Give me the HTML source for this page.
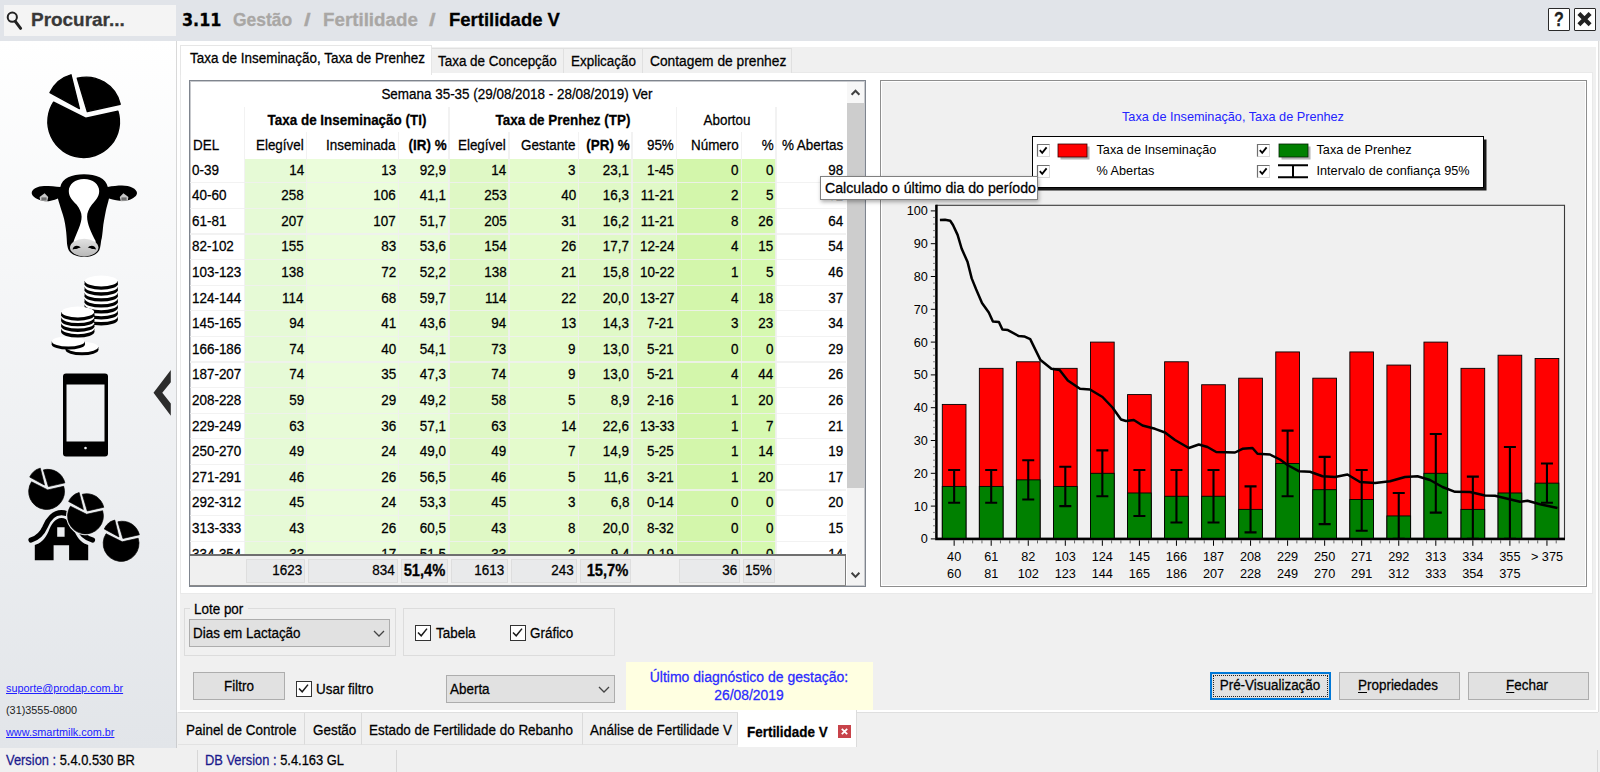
<!DOCTYPE html>
<html lang="pt-BR"><head><meta charset="utf-8"><title>Fertilidade V</title>
<style>
*{box-sizing:border-box}
html,body{margin:0;padding:0}
body{width:1600px;height:772px;overflow:hidden;background:#f0f0f0;position:relative;font-family:"Liberation Sans",Arial,sans-serif;font-size:15.4px;color:#000}
div{position:absolute;white-space:nowrap}
svg{position:absolute;overflow:visible}
.t{transform:scaleX(0.873);color:#000;-webkit-text-stroke:0.28px currentColor}
.b{font-weight:bold}
.dj{font-family:"DejaVu Sans","Liberation Sans",sans-serif}
.g{color:#a9a7a5}
.blue{color:#2a2aff}
.navy{color:#1a1a8c}
.lnk{color:#2020ff;text-decoration:underline;-webkit-text-stroke:0}
.ph{color:#222;-webkit-text-stroke:0}
#hdr{left:0;top:0;width:1600px;height:41px;background:#e1e4e9}
#srch{left:4px;top:5px;width:172px;height:31px;background:#f4f4f4}
.wbtn{top:8px;width:22px;height:22.5px;background:#fff;border:1.7px solid #2a2a2a;border-radius:1px}
#side{left:0;top:41px;width:177px;height:707px;background:linear-gradient(#ffffff,#e2e5e9);border-right:1px solid rgba(185,185,185,.55)}
#panel{left:177px;top:41px;width:1421px;height:671px;background:#f0f0f0;border:solid #fff;border-width:6.5px 2px 1px 3px;box-shadow:1px 0 0 #dcdcdc}
.itab{top:47.5px;height:25px;background:#f0f0f0;border:1px solid #e0e0e0;border-bottom:none}
.itab.act{top:45px;height:30px;background:#fff;border-color:#e6e6e6}
#pane{left:180px;top:72px;width:1413px;height:522px;background:#fff;border:1px solid #e9e9e9}
#tbl{left:189px;top:80px;width:677px;height:507px;border:1px solid #7f858e;background:#fff;box-shadow:inset 0 0 0 1px rgba(130,135,144,.45)}
.hl{left:190px;width:656px;height:1.2px;background:#f0f0f0;opacity:.85}
.vl{width:1.2px;background:#f0f0f0;opacity:.85}
.fc{top:558.5px;height:24px;background:#e9eaeb;border:1px solid #dedede}
#tfootbg{left:190px;top:555px;width:656px;height:30px;background:#f0f0f0}
#sb{left:847px;top:82px;width:17px;height:503px;background:#f3f3f3}
#sb .thumb{left:0;top:20px;width:17px;height:385.6px;background:#cdcdcd}
#cpanel{left:880px;top:80px;width:707px;height:507px;border:1px solid #8e8e8e;background:#f0f0f0}
#cpanel i{position:absolute;left:0;top:0;right:0;bottom:0;border:1px solid #fff}
.chart{left:880px;top:80px}
#tip{left:820px;top:175.6px;width:218px;height:24.6px;background:#fff;border:1px solid #808080;box-shadow:1px 2px 4px rgba(0,0,0,.32)}
.gb{border:1px solid #dcdcdc}
.combo{background:#e1e1e1;border:1px solid #adadad}
.combo svg{right:4.5px;top:9.5px}
.btn{background:#e1e1e1;border:1px solid #adadad;height:28px}
u{text-decoration-thickness:1px;text-underline-offset:2px}
.cb{width:15.5px;height:15.5px;border:1px solid #333;background:#fff}
.cb svg{left:0;top:0}
#ybox{left:626px;top:662px;width:247px;height:48px;background:#ffffe1}
#btabs{left:178px;top:710px;width:1420px;height:39px;background:#f0f0f0;border-top:2.5px solid #fff;border-bottom:1.2px solid #d8d8d8;box-shadow:inset 0 1px 0 #dfdfdf}
.btab{top:713px;height:32px;border-right:1px solid #dadada;border-bottom:1px solid #e2e2e2;background:#f0f0f0}
.btab.act{top:710px;height:37px;background:#fff;border:none;border-right:1px solid #dcdcdc}
#status{left:0;top:748px;width:1600px;height:24px;background:#f0f0f0}
#status .sep{top:2px;width:1px;height:22px;background:#d7d7d7}

</style></head>
<body>
<div id="hdr"></div>
<div id="srch"></div>
<svg width="20" height="24" viewBox="0 0 20 24" style="left:5px;top:8px"><circle cx="7.3" cy="9.2" r="4.6" fill="none" stroke="#222" stroke-width="2"/><path d="M10.3 13.4L15.6 20.3" stroke="#222" stroke-width="3" stroke-linecap="round"/></svg>
<div class="t b" style="top:8px;height:24px;line-height:24px;font-size:18.4px;left:30.5px;transform-origin:0 50%;transform:scaleX(1.03);color:#383838;">Procurar...</div>
<div class="t b dj" style="top:8px;height:24px;line-height:24px;font-size:17.2px;left:182px;transform-origin:0 50%;transform:scaleX(0.93);">3.11</div>
<div class="t b g" style="top:8px;height:24px;line-height:24px;font-size:18.4px;left:233px;transform-origin:0 50%;transform:scaleX(0.95);">Gestão</div>
<div class="t b g" style="top:8px;height:24px;line-height:24px;font-size:18.4px;left:303.5px;transform-origin:0 50%;transform:scaleX(1.3);">/</div>
<div class="t b g" style="top:8px;height:24px;line-height:24px;font-size:18.4px;left:323px;transform-origin:0 50%;transform:scaleX(1.02);">Fertilidade</div>
<div class="t b g" style="top:8px;height:24px;line-height:24px;font-size:18.4px;left:429px;transform-origin:0 50%;transform:scaleX(1.3);">/</div>
<div class="t b" style="top:8px;height:24px;line-height:24px;font-size:18.4px;left:448.5px;transform-origin:0 50%;transform:scaleX(1.005);">Fertilidade V</div>
<div class="wbtn" style="left:1548px"></div>
<div class="t b" style="left:1548px;width:22px;top:8px;height:22px;line-height:22.3px;text-align:center;font-size:20.5px;transform:scaleX(.78);transform-origin:50% 50%;color:#222">?</div>
<div class="wbtn" style="left:1574px"><svg width="18" height="18" viewBox="0 0 18 18" style="left:0;top:0"><path d="M3.9 4.5L15.1 15.7M15.1 4.5L3.9 15.7" stroke="#222" stroke-width="4.2"/></svg></div>
<div id="side"></div>
<svg width="177" height="772" viewBox="0 0 177 772" style="left:0;top:0">
<defs><linearGradient id="mz" x1="0" y1="0" x2="0" y2="1"><stop offset="0" stop-color="#e2e2e2"/><stop offset="1" stop-color="#b8b8b8"/></linearGradient>
</defs>
<g stroke-linejoin="round" fill="#000" stroke="#000" stroke-width="1.4"><path d="M86 118.3 L117.9 111.2 A35.8 35.8 0 1 1 53.6 102.2 Z"/><path d="M87.3 111.6 L120.2 104.2 A35 35 0 0 0 77.3 78.3 Z"/><path d="M79.4 108.6 L50 92.6 A33 33 0 0 1 71 74.8 Z"/></g>
<path fill="#000" d="M60.3 187C62 178 72 174.2 84 174.2C96 174.2 106 178 107.8 187C112 186 118 185.5 122 185.5C130 185.5 137 189 137 193C137 196 133 198.5 129 200C124 202 116 200.5 109 198.4C108 203 106.5 207 105.9 210.6C104.5 218 103.3 224 102.9 228.8C102.3 235 102 238 101.1 241C100.5 246 100 250 98 252C95 255.5 90 256.8 84.6 256.8C79 256.8 73 255.5 70 252C68 250 67.3 246 67 243.5C66.7 238 66.5 234 65.8 228.8C65 222 63.5 216 61.5 210.6C60.5 207 58.8 202 57.9 198.4C52 200.8 46 202.3 41 200.5C36 199 31.7 196 31.7 193C31.7 189 38 186 44 186C50 186 56 186.5 60.3 187Z"/>
<path fill="#fff" d="M84 179C93 179 99.2 184.5 99.2 191C99.2 197 95 201 92 204.5C88.5 209 87.1 213 87.1 216.7C87.1 224 91 232 95.6 241L95.6 247L73.7 247L73.7 241C77 232 81.6 224 81.6 216.7C81.6 213 80 209 76.5 204.5C73 201 68.8 197 68.8 191C68.8 184.5 75 179 84 179Z"/>
<ellipse cx="84.2" cy="247.6" rx="14.2" ry="8.8" fill="url(#mz)"/>
<path fill="#000" d="M72.6 249.6C72.8 245.2 78.8 244.2 80.8 248C78.6 247.2 77.8 249.4 75.6 249C74.4 248.8 73.4 249 72.6 249.6ZM96 249.6C95.8 245.2 89.8 244.2 87.8 248C90 247.2 90.8 249.4 93 249C94.2 248.8 95.2 249 96 249.6Z"/>
<path fill="#c9c9c9" d="M39.6 197L44.6 193.2L48.2 197L47.2 201.6L40.2 200.8Z"/><path fill="#6e6e6e" d="M41.4 197.4h5.2v3.2h-5.2z"/>
<path fill="#c9c9c9" d="M128.4 197L123.4 193.2L119.8 197L120.8 201.6L127.8 200.8Z"/><path fill="#6e6e6e" d="M121.4 197.4h5.2v3.2h-5.2z"/>
<ellipse cx="82" cy="350" rx="16.4" ry="5.2" fill="#000"/><rect x="65.6" y="347" width="32.8" height="3" fill="#000"/><ellipse cx="82" cy="347" rx="16.2" ry="5.2" fill="#fff"/>
<ellipse cx="68.3" cy="344.4" rx="16.6" ry="5.2" fill="#000"/><rect x="51.7" y="341.4" width="33.2" height="3" fill="#000"/><ellipse cx="68.3" cy="341.4" rx="16.4" ry="5.2" fill="#fff"/>
<ellipse cx="101.2" cy="320" rx="16.6" ry="5.4" fill="#000"/><rect x="84.6" y="316.7" width="33.2" height="3.3" fill="#000"/><ellipse cx="101.2" cy="316.7" rx="16.4" ry="5.4" fill="#fff"/>
<ellipse cx="101.2" cy="314.05" rx="16.6" ry="5.4" fill="#000"/><rect x="84.6" y="310.75" width="33.2" height="3.3" fill="#000"/><ellipse cx="101.2" cy="310.75" rx="16.4" ry="5.4" fill="#fff"/>
<ellipse cx="101.2" cy="308.1" rx="16.6" ry="5.4" fill="#000"/><rect x="84.6" y="304.8" width="33.2" height="3.3" fill="#000"/><ellipse cx="101.2" cy="304.8" rx="16.4" ry="5.4" fill="#fff"/>
<ellipse cx="101.2" cy="302.15" rx="16.6" ry="5.4" fill="#000"/><rect x="84.6" y="298.85" width="33.2" height="3.3" fill="#000"/><ellipse cx="101.2" cy="298.85" rx="16.4" ry="5.4" fill="#fff"/>
<ellipse cx="101.2" cy="296.2" rx="16.6" ry="5.4" fill="#000"/><rect x="84.6" y="292.9" width="33.2" height="3.3" fill="#000"/><ellipse cx="101.2" cy="292.9" rx="16.4" ry="5.4" fill="#fff"/>
<ellipse cx="101.2" cy="290.25" rx="16.6" ry="5.4" fill="#000"/><rect x="84.6" y="286.95" width="33.2" height="3.3" fill="#000"/><ellipse cx="101.2" cy="286.95" rx="16.4" ry="5.4" fill="#fff"/>
<ellipse cx="101.2" cy="284.3" rx="16.6" ry="5.4" fill="#000"/><rect x="84.6" y="281" width="33.2" height="3.3" fill="#000"/><ellipse cx="101.2" cy="281" rx="16.4" ry="5.4" fill="#fff"/>
<ellipse cx="77.8" cy="332.1" rx="16.6" ry="5.4" fill="#000"/><rect x="61.2" y="328.8" width="33.2" height="3.3" fill="#000"/><ellipse cx="77.8" cy="328.8" rx="16.4" ry="5.4" fill="#fff"/>
<ellipse cx="77.8" cy="326.5" rx="16.6" ry="5.4" fill="#000"/><rect x="61.2" y="323.2" width="33.2" height="3.3" fill="#000"/><ellipse cx="77.8" cy="323.2" rx="16.4" ry="5.4" fill="#fff"/>
<ellipse cx="77.8" cy="320.9" rx="16.6" ry="5.4" fill="#000"/><rect x="61.2" y="317.6" width="33.2" height="3.3" fill="#000"/><ellipse cx="77.8" cy="317.6" rx="16.4" ry="5.4" fill="#fff"/>
<ellipse cx="77.8" cy="315.3" rx="16.6" ry="5.4" fill="#000"/><rect x="61.2" y="312" width="33.2" height="3.3" fill="#000"/><ellipse cx="77.8" cy="312" rx="16.4" ry="5.4" fill="#fff"/>
<path fill="#000" fill-rule="evenodd" d="M66 373.5h39a3 3 0 0 1 3 3v77a3 3 0 0 1-3 3h-39a3 3 0 0 1-3-3v-77a3 3 0 0 1 3-3zM66.5 384.5v57h38v-57zM85.5 446.7a1.3 1.3 0 1 0 .01 0z"/>
<path d="M153.5 392.8L170.8 370L170.8 382.3L162.3 392.8L170.8 403.4L170.8 415.7Z" fill="#2c2c2c"/>
<path d="M31 540C38 538 42 534 45 527C48 519 54 512.6 61.5 512.6C69 512.6 75 519 78 527C81 534 85 538 92.5 540" stroke="#000" stroke-width="5.2" stroke-linecap="round" fill="none"/>
<path fill="#000" fill-rule="evenodd" d="M34.8 560.2V545C40 543.5 45 539.5 48.5 531.5C51 524.5 55 518 61.5 518C68 518 72 524.5 74.5 531.5C78 539.5 83 543.5 88.2 545V560.2H69.1V545.2H53.6V560.2ZM57.2 527.2h7.4v9.6h-7.4z"/>
<g transform="translate(4.75 430.75) scale(.5)"><g stroke-linejoin="round" fill="#eceef0" stroke="#eceef0" stroke-width="5.6"><path d="M86 118.3 L117.9 111.2 A35.8 35.8 0 1 1 53.6 102.2 Z"/><path d="M87.3 111.6 L120.2 104.2 A35 35 0 0 0 77.3 78.3 Z"/><path d="M79.4 108.6 L50 92.6 A33 33 0 0 1 71 74.8 Z"/></g><g stroke-linejoin="round" fill="#000" stroke="#000" stroke-width="1.4"><path d="M86 118.3 L117.9 111.2 A35.8 35.8 0 1 1 53.6 102.2 Z"/><path d="M87.3 111.6 L120.2 104.2 A35 35 0 0 0 77.3 78.3 Z"/><path d="M79.4 108.6 L50 92.6 A33 33 0 0 1 71 74.8 Z"/></g></g>
<g transform="translate(43.65 455.15) scale(.5)"><g stroke-linejoin="round" fill="#eceef0" stroke="#eceef0" stroke-width="5.6"><path d="M86 118.3 L117.9 111.2 A35.8 35.8 0 1 1 53.6 102.2 Z"/><path d="M87.3 111.6 L120.2 104.2 A35 35 0 0 0 77.3 78.3 Z"/><path d="M79.4 108.6 L50 92.6 A33 33 0 0 1 71 74.8 Z"/></g><g stroke-linejoin="round" fill="#000" stroke="#000" stroke-width="1.4"><path d="M86 118.3 L117.9 111.2 A35.8 35.8 0 1 1 53.6 102.2 Z"/><path d="M87.3 111.6 L120.2 104.2 A35 35 0 0 0 77.3 78.3 Z"/><path d="M79.4 108.6 L50 92.6 A33 33 0 0 1 71 74.8 Z"/></g></g>
<g transform="translate(79.25 482.65) scale(.5)"><g stroke-linejoin="round" fill="#eceef0" stroke="#eceef0" stroke-width="5.6"><path d="M86 118.3 L117.9 111.2 A35.8 35.8 0 1 1 53.6 102.2 Z"/><path d="M87.3 111.6 L120.2 104.2 A35 35 0 0 0 77.3 78.3 Z"/><path d="M79.4 108.6 L50 92.6 A33 33 0 0 1 71 74.8 Z"/></g><g stroke-linejoin="round" fill="#000" stroke="#000" stroke-width="1.4"><path d="M86 118.3 L117.9 111.2 A35.8 35.8 0 1 1 53.6 102.2 Z"/><path d="M87.3 111.6 L120.2 104.2 A35 35 0 0 0 77.3 78.3 Z"/><path d="M79.4 108.6 L50 92.6 A33 33 0 0 1 71 74.8 Z"/></g></g>
</svg>
<div class="t lnk" style="top:681.3px;height:14px;line-height:14px;font-size:10.85px;left:6px;transform-origin:0 50%;transform:scaleX(1);">suporte@prodap.com.br</div>
<div class="t ph" style="top:702.7px;height:14px;line-height:14px;font-size:10.85px;left:6px;transform-origin:0 50%;transform:scaleX(1);">(31)3555-0800</div>
<div class="t lnk" style="top:724.8px;height:14px;line-height:14px;font-size:10.85px;left:6px;transform-origin:0 50%;transform:scaleX(1);">www.smartmilk.com.br</div>
<div id="panel"></div>
<div id="pane"></div>
<div class="itab" style="left:431px;width:133px"></div>
<div class="itab" style="left:563px;width:80px"></div>
<div class="itab" style="left:642px;width:150px;border-right:1px solid #e0e0e0"></div>
<div class="itab act" style="left:180px;width:252px"></div>
<div class="t " style="top:47.6px;height:20px;line-height:20px;left:190px;transform-origin:0 50%;">Taxa de Inseminação, Taxa de Prenhez</div>
<div class="t " style="top:50.8px;height:20px;line-height:20px;left:437.5px;transform-origin:0 50%;">Taxa de Concepção</div>
<div class="t " style="top:50.8px;height:20px;line-height:20px;left:570.5px;transform-origin:0 50%;">Explicação</div>
<div class="t " style="top:50.8px;height:20px;line-height:20px;left:650.3px;transform-origin:0 50%;transform:scaleX(0.895);">Contagem de prenhez</div>
<div id="tbl"></div>
<div id="gclip" style="left:0;top:0;width:1600px;height:554.3px;overflow:hidden">
<div style="left:244.5px;width:62px;top:158.6px;height:395.7px;background:#e6fad6"></div>
<div style="left:306.5px;width:92.3px;top:158.6px;height:395.7px;background:#ebfddb"></div>
<div style="left:398.8px;width:50.2px;top:158.6px;height:395.7px;background:#e9fcd9"></div>
<div style="left:449px;width:60px;top:158.6px;height:395.7px;background:#dff8c5"></div>
<div style="left:509px;width:69.5px;top:158.6px;height:395.7px;background:#e4fbcc"></div>
<div style="left:578.5px;width:53.5px;top:158.6px;height:395.7px;background:#e0f9c7"></div>
<div style="left:632px;width:44.7px;top:158.6px;height:395.7px;background:#e0f9c7"></div>
<div style="left:676.7px;width:64.6px;top:158.6px;height:395.7px;background:#d3f6ab"></div>
<div style="left:741.3px;width:34.7px;top:158.6px;height:395.7px;background:#d6f9b0"></div>
<div class="hl" style="top:182.2px"></div>
<div class="hl" style="top:207.8px"></div>
<div class="hl" style="top:233.4px"></div>
<div class="hl" style="top:259px"></div>
<div class="hl" style="top:284.6px"></div>
<div class="hl" style="top:310.2px"></div>
<div class="hl" style="top:335.8px"></div>
<div class="hl" style="top:361.4px"></div>
<div class="hl" style="top:387px"></div>
<div class="hl" style="top:412.6px"></div>
<div class="hl" style="top:438.2px"></div>
<div class="hl" style="top:463.8px"></div>
<div class="hl" style="top:489.4px"></div>
<div class="hl" style="top:515px"></div>
<div class="hl" style="top:540.6px"></div>
<div class="vl" style="left:243.9px;top:107px;height:447.3px"></div>
<div class="vl" style="left:305.9px;top:132px;height:422.3px"></div>
<div class="vl" style="left:398.2px;top:132px;height:422.3px"></div>
<div class="vl" style="left:448.4px;top:107px;height:447.3px"></div>
<div class="vl" style="left:508.4px;top:132px;height:422.3px"></div>
<div class="vl" style="left:577.9px;top:132px;height:422.3px"></div>
<div class="vl" style="left:631.4px;top:132px;height:422.3px"></div>
<div class="vl" style="left:676.1px;top:107px;height:447.3px"></div>
<div class="vl" style="left:740.7px;top:132px;height:422.3px"></div>
<div class="vl" style="left:775.4px;top:107px;height:447.3px"></div>
<div class="t " style="top:159.6px;height:20px;line-height:20px;left:191.8px;transform-origin:0 50%;">0-39</div>
<div class="t " style="top:159.6px;height:20px;line-height:20px;right:1296.3px;transform-origin:100% 50%;">14</div>
<div class="t " style="top:159.6px;height:20px;line-height:20px;right:1204px;transform-origin:100% 50%;">13</div>
<div class="t " style="top:159.6px;height:20px;line-height:20px;right:1153.8px;transform-origin:100% 50%;">92,9</div>
<div class="t " style="top:159.6px;height:20px;line-height:20px;right:1093.8px;transform-origin:100% 50%;">14</div>
<div class="t " style="top:159.6px;height:20px;line-height:20px;right:1024.3px;transform-origin:100% 50%;">3</div>
<div class="t " style="top:159.6px;height:20px;line-height:20px;right:970.8px;transform-origin:100% 50%;">23,1</div>
<div class="t " style="top:159.6px;height:20px;line-height:20px;right:926.1px;transform-origin:100% 50%;">1-45</div>
<div class="t " style="top:159.6px;height:20px;line-height:20px;right:861.5px;transform-origin:100% 50%;">0</div>
<div class="t " style="top:159.6px;height:20px;line-height:20px;right:826.8px;transform-origin:100% 50%;">0</div>
<div class="t " style="top:159.6px;height:20px;line-height:20px;right:757.3px;transform-origin:100% 50%;">98</div>
<div class="t " style="top:185.2px;height:20px;line-height:20px;left:191.8px;transform-origin:0 50%;">40-60</div>
<div class="t " style="top:185.2px;height:20px;line-height:20px;right:1296.3px;transform-origin:100% 50%;">258</div>
<div class="t " style="top:185.2px;height:20px;line-height:20px;right:1204px;transform-origin:100% 50%;">106</div>
<div class="t " style="top:185.2px;height:20px;line-height:20px;right:1153.8px;transform-origin:100% 50%;">41,1</div>
<div class="t " style="top:185.2px;height:20px;line-height:20px;right:1093.8px;transform-origin:100% 50%;">253</div>
<div class="t " style="top:185.2px;height:20px;line-height:20px;right:1024.3px;transform-origin:100% 50%;">40</div>
<div class="t " style="top:185.2px;height:20px;line-height:20px;right:970.8px;transform-origin:100% 50%;">16,3</div>
<div class="t " style="top:185.2px;height:20px;line-height:20px;right:926.1px;transform-origin:100% 50%;">11-21</div>
<div class="t " style="top:185.2px;height:20px;line-height:20px;right:861.5px;transform-origin:100% 50%;">2</div>
<div class="t " style="top:185.2px;height:20px;line-height:20px;right:826.8px;transform-origin:100% 50%;">5</div>
<div class="t " style="top:185.2px;height:20px;line-height:20px;right:757.3px;transform-origin:100% 50%;">82</div>
<div class="t " style="top:210.8px;height:20px;line-height:20px;left:191.8px;transform-origin:0 50%;">61-81</div>
<div class="t " style="top:210.8px;height:20px;line-height:20px;right:1296.3px;transform-origin:100% 50%;">207</div>
<div class="t " style="top:210.8px;height:20px;line-height:20px;right:1204px;transform-origin:100% 50%;">107</div>
<div class="t " style="top:210.8px;height:20px;line-height:20px;right:1153.8px;transform-origin:100% 50%;">51,7</div>
<div class="t " style="top:210.8px;height:20px;line-height:20px;right:1093.8px;transform-origin:100% 50%;">205</div>
<div class="t " style="top:210.8px;height:20px;line-height:20px;right:1024.3px;transform-origin:100% 50%;">31</div>
<div class="t " style="top:210.8px;height:20px;line-height:20px;right:970.8px;transform-origin:100% 50%;">16,2</div>
<div class="t " style="top:210.8px;height:20px;line-height:20px;right:926.1px;transform-origin:100% 50%;">11-21</div>
<div class="t " style="top:210.8px;height:20px;line-height:20px;right:861.5px;transform-origin:100% 50%;">8</div>
<div class="t " style="top:210.8px;height:20px;line-height:20px;right:826.8px;transform-origin:100% 50%;">26</div>
<div class="t " style="top:210.8px;height:20px;line-height:20px;right:757.3px;transform-origin:100% 50%;">64</div>
<div class="t " style="top:236.4px;height:20px;line-height:20px;left:191.8px;transform-origin:0 50%;">82-102</div>
<div class="t " style="top:236.4px;height:20px;line-height:20px;right:1296.3px;transform-origin:100% 50%;">155</div>
<div class="t " style="top:236.4px;height:20px;line-height:20px;right:1204px;transform-origin:100% 50%;">83</div>
<div class="t " style="top:236.4px;height:20px;line-height:20px;right:1153.8px;transform-origin:100% 50%;">53,6</div>
<div class="t " style="top:236.4px;height:20px;line-height:20px;right:1093.8px;transform-origin:100% 50%;">154</div>
<div class="t " style="top:236.4px;height:20px;line-height:20px;right:1024.3px;transform-origin:100% 50%;">26</div>
<div class="t " style="top:236.4px;height:20px;line-height:20px;right:970.8px;transform-origin:100% 50%;">17,7</div>
<div class="t " style="top:236.4px;height:20px;line-height:20px;right:926.1px;transform-origin:100% 50%;">12-24</div>
<div class="t " style="top:236.4px;height:20px;line-height:20px;right:861.5px;transform-origin:100% 50%;">4</div>
<div class="t " style="top:236.4px;height:20px;line-height:20px;right:826.8px;transform-origin:100% 50%;">15</div>
<div class="t " style="top:236.4px;height:20px;line-height:20px;right:757.3px;transform-origin:100% 50%;">54</div>
<div class="t " style="top:262px;height:20px;line-height:20px;left:191.8px;transform-origin:0 50%;">103-123</div>
<div class="t " style="top:262px;height:20px;line-height:20px;right:1296.3px;transform-origin:100% 50%;">138</div>
<div class="t " style="top:262px;height:20px;line-height:20px;right:1204px;transform-origin:100% 50%;">72</div>
<div class="t " style="top:262px;height:20px;line-height:20px;right:1153.8px;transform-origin:100% 50%;">52,2</div>
<div class="t " style="top:262px;height:20px;line-height:20px;right:1093.8px;transform-origin:100% 50%;">138</div>
<div class="t " style="top:262px;height:20px;line-height:20px;right:1024.3px;transform-origin:100% 50%;">21</div>
<div class="t " style="top:262px;height:20px;line-height:20px;right:970.8px;transform-origin:100% 50%;">15,8</div>
<div class="t " style="top:262px;height:20px;line-height:20px;right:926.1px;transform-origin:100% 50%;">10-22</div>
<div class="t " style="top:262px;height:20px;line-height:20px;right:861.5px;transform-origin:100% 50%;">1</div>
<div class="t " style="top:262px;height:20px;line-height:20px;right:826.8px;transform-origin:100% 50%;">5</div>
<div class="t " style="top:262px;height:20px;line-height:20px;right:757.3px;transform-origin:100% 50%;">46</div>
<div class="t " style="top:287.6px;height:20px;line-height:20px;left:191.8px;transform-origin:0 50%;">124-144</div>
<div class="t " style="top:287.6px;height:20px;line-height:20px;right:1296.3px;transform-origin:100% 50%;">114</div>
<div class="t " style="top:287.6px;height:20px;line-height:20px;right:1204px;transform-origin:100% 50%;">68</div>
<div class="t " style="top:287.6px;height:20px;line-height:20px;right:1153.8px;transform-origin:100% 50%;">59,7</div>
<div class="t " style="top:287.6px;height:20px;line-height:20px;right:1093.8px;transform-origin:100% 50%;">114</div>
<div class="t " style="top:287.6px;height:20px;line-height:20px;right:1024.3px;transform-origin:100% 50%;">22</div>
<div class="t " style="top:287.6px;height:20px;line-height:20px;right:970.8px;transform-origin:100% 50%;">20,0</div>
<div class="t " style="top:287.6px;height:20px;line-height:20px;right:926.1px;transform-origin:100% 50%;">13-27</div>
<div class="t " style="top:287.6px;height:20px;line-height:20px;right:861.5px;transform-origin:100% 50%;">4</div>
<div class="t " style="top:287.6px;height:20px;line-height:20px;right:826.8px;transform-origin:100% 50%;">18</div>
<div class="t " style="top:287.6px;height:20px;line-height:20px;right:757.3px;transform-origin:100% 50%;">37</div>
<div class="t " style="top:313.2px;height:20px;line-height:20px;left:191.8px;transform-origin:0 50%;">145-165</div>
<div class="t " style="top:313.2px;height:20px;line-height:20px;right:1296.3px;transform-origin:100% 50%;">94</div>
<div class="t " style="top:313.2px;height:20px;line-height:20px;right:1204px;transform-origin:100% 50%;">41</div>
<div class="t " style="top:313.2px;height:20px;line-height:20px;right:1153.8px;transform-origin:100% 50%;">43,6</div>
<div class="t " style="top:313.2px;height:20px;line-height:20px;right:1093.8px;transform-origin:100% 50%;">94</div>
<div class="t " style="top:313.2px;height:20px;line-height:20px;right:1024.3px;transform-origin:100% 50%;">13</div>
<div class="t " style="top:313.2px;height:20px;line-height:20px;right:970.8px;transform-origin:100% 50%;">14,3</div>
<div class="t " style="top:313.2px;height:20px;line-height:20px;right:926.1px;transform-origin:100% 50%;">7-21</div>
<div class="t " style="top:313.2px;height:20px;line-height:20px;right:861.5px;transform-origin:100% 50%;">3</div>
<div class="t " style="top:313.2px;height:20px;line-height:20px;right:826.8px;transform-origin:100% 50%;">23</div>
<div class="t " style="top:313.2px;height:20px;line-height:20px;right:757.3px;transform-origin:100% 50%;">34</div>
<div class="t " style="top:338.8px;height:20px;line-height:20px;left:191.8px;transform-origin:0 50%;">166-186</div>
<div class="t " style="top:338.8px;height:20px;line-height:20px;right:1296.3px;transform-origin:100% 50%;">74</div>
<div class="t " style="top:338.8px;height:20px;line-height:20px;right:1204px;transform-origin:100% 50%;">40</div>
<div class="t " style="top:338.8px;height:20px;line-height:20px;right:1153.8px;transform-origin:100% 50%;">54,1</div>
<div class="t " style="top:338.8px;height:20px;line-height:20px;right:1093.8px;transform-origin:100% 50%;">73</div>
<div class="t " style="top:338.8px;height:20px;line-height:20px;right:1024.3px;transform-origin:100% 50%;">9</div>
<div class="t " style="top:338.8px;height:20px;line-height:20px;right:970.8px;transform-origin:100% 50%;">13,0</div>
<div class="t " style="top:338.8px;height:20px;line-height:20px;right:926.1px;transform-origin:100% 50%;">5-21</div>
<div class="t " style="top:338.8px;height:20px;line-height:20px;right:861.5px;transform-origin:100% 50%;">0</div>
<div class="t " style="top:338.8px;height:20px;line-height:20px;right:826.8px;transform-origin:100% 50%;">0</div>
<div class="t " style="top:338.8px;height:20px;line-height:20px;right:757.3px;transform-origin:100% 50%;">29</div>
<div class="t " style="top:364.4px;height:20px;line-height:20px;left:191.8px;transform-origin:0 50%;">187-207</div>
<div class="t " style="top:364.4px;height:20px;line-height:20px;right:1296.3px;transform-origin:100% 50%;">74</div>
<div class="t " style="top:364.4px;height:20px;line-height:20px;right:1204px;transform-origin:100% 50%;">35</div>
<div class="t " style="top:364.4px;height:20px;line-height:20px;right:1153.8px;transform-origin:100% 50%;">47,3</div>
<div class="t " style="top:364.4px;height:20px;line-height:20px;right:1093.8px;transform-origin:100% 50%;">74</div>
<div class="t " style="top:364.4px;height:20px;line-height:20px;right:1024.3px;transform-origin:100% 50%;">9</div>
<div class="t " style="top:364.4px;height:20px;line-height:20px;right:970.8px;transform-origin:100% 50%;">13,0</div>
<div class="t " style="top:364.4px;height:20px;line-height:20px;right:926.1px;transform-origin:100% 50%;">5-21</div>
<div class="t " style="top:364.4px;height:20px;line-height:20px;right:861.5px;transform-origin:100% 50%;">4</div>
<div class="t " style="top:364.4px;height:20px;line-height:20px;right:826.8px;transform-origin:100% 50%;">44</div>
<div class="t " style="top:364.4px;height:20px;line-height:20px;right:757.3px;transform-origin:100% 50%;">26</div>
<div class="t " style="top:390px;height:20px;line-height:20px;left:191.8px;transform-origin:0 50%;">208-228</div>
<div class="t " style="top:390px;height:20px;line-height:20px;right:1296.3px;transform-origin:100% 50%;">59</div>
<div class="t " style="top:390px;height:20px;line-height:20px;right:1204px;transform-origin:100% 50%;">29</div>
<div class="t " style="top:390px;height:20px;line-height:20px;right:1153.8px;transform-origin:100% 50%;">49,2</div>
<div class="t " style="top:390px;height:20px;line-height:20px;right:1093.8px;transform-origin:100% 50%;">58</div>
<div class="t " style="top:390px;height:20px;line-height:20px;right:1024.3px;transform-origin:100% 50%;">5</div>
<div class="t " style="top:390px;height:20px;line-height:20px;right:970.8px;transform-origin:100% 50%;">8,9</div>
<div class="t " style="top:390px;height:20px;line-height:20px;right:926.1px;transform-origin:100% 50%;">2-16</div>
<div class="t " style="top:390px;height:20px;line-height:20px;right:861.5px;transform-origin:100% 50%;">1</div>
<div class="t " style="top:390px;height:20px;line-height:20px;right:826.8px;transform-origin:100% 50%;">20</div>
<div class="t " style="top:390px;height:20px;line-height:20px;right:757.3px;transform-origin:100% 50%;">26</div>
<div class="t " style="top:415.6px;height:20px;line-height:20px;left:191.8px;transform-origin:0 50%;">229-249</div>
<div class="t " style="top:415.6px;height:20px;line-height:20px;right:1296.3px;transform-origin:100% 50%;">63</div>
<div class="t " style="top:415.6px;height:20px;line-height:20px;right:1204px;transform-origin:100% 50%;">36</div>
<div class="t " style="top:415.6px;height:20px;line-height:20px;right:1153.8px;transform-origin:100% 50%;">57,1</div>
<div class="t " style="top:415.6px;height:20px;line-height:20px;right:1093.8px;transform-origin:100% 50%;">63</div>
<div class="t " style="top:415.6px;height:20px;line-height:20px;right:1024.3px;transform-origin:100% 50%;">14</div>
<div class="t " style="top:415.6px;height:20px;line-height:20px;right:970.8px;transform-origin:100% 50%;">22,6</div>
<div class="t " style="top:415.6px;height:20px;line-height:20px;right:926.1px;transform-origin:100% 50%;">13-33</div>
<div class="t " style="top:415.6px;height:20px;line-height:20px;right:861.5px;transform-origin:100% 50%;">1</div>
<div class="t " style="top:415.6px;height:20px;line-height:20px;right:826.8px;transform-origin:100% 50%;">7</div>
<div class="t " style="top:415.6px;height:20px;line-height:20px;right:757.3px;transform-origin:100% 50%;">21</div>
<div class="t " style="top:441.2px;height:20px;line-height:20px;left:191.8px;transform-origin:0 50%;">250-270</div>
<div class="t " style="top:441.2px;height:20px;line-height:20px;right:1296.3px;transform-origin:100% 50%;">49</div>
<div class="t " style="top:441.2px;height:20px;line-height:20px;right:1204px;transform-origin:100% 50%;">24</div>
<div class="t " style="top:441.2px;height:20px;line-height:20px;right:1153.8px;transform-origin:100% 50%;">49,0</div>
<div class="t " style="top:441.2px;height:20px;line-height:20px;right:1093.8px;transform-origin:100% 50%;">49</div>
<div class="t " style="top:441.2px;height:20px;line-height:20px;right:1024.3px;transform-origin:100% 50%;">7</div>
<div class="t " style="top:441.2px;height:20px;line-height:20px;right:970.8px;transform-origin:100% 50%;">14,9</div>
<div class="t " style="top:441.2px;height:20px;line-height:20px;right:926.1px;transform-origin:100% 50%;">5-25</div>
<div class="t " style="top:441.2px;height:20px;line-height:20px;right:861.5px;transform-origin:100% 50%;">1</div>
<div class="t " style="top:441.2px;height:20px;line-height:20px;right:826.8px;transform-origin:100% 50%;">14</div>
<div class="t " style="top:441.2px;height:20px;line-height:20px;right:757.3px;transform-origin:100% 50%;">19</div>
<div class="t " style="top:466.8px;height:20px;line-height:20px;left:191.8px;transform-origin:0 50%;">271-291</div>
<div class="t " style="top:466.8px;height:20px;line-height:20px;right:1296.3px;transform-origin:100% 50%;">46</div>
<div class="t " style="top:466.8px;height:20px;line-height:20px;right:1204px;transform-origin:100% 50%;">26</div>
<div class="t " style="top:466.8px;height:20px;line-height:20px;right:1153.8px;transform-origin:100% 50%;">56,5</div>
<div class="t " style="top:466.8px;height:20px;line-height:20px;right:1093.8px;transform-origin:100% 50%;">46</div>
<div class="t " style="top:466.8px;height:20px;line-height:20px;right:1024.3px;transform-origin:100% 50%;">5</div>
<div class="t " style="top:466.8px;height:20px;line-height:20px;right:970.8px;transform-origin:100% 50%;">11,6</div>
<div class="t " style="top:466.8px;height:20px;line-height:20px;right:926.1px;transform-origin:100% 50%;">3-21</div>
<div class="t " style="top:466.8px;height:20px;line-height:20px;right:861.5px;transform-origin:100% 50%;">1</div>
<div class="t " style="top:466.8px;height:20px;line-height:20px;right:826.8px;transform-origin:100% 50%;">20</div>
<div class="t " style="top:466.8px;height:20px;line-height:20px;right:757.3px;transform-origin:100% 50%;">17</div>
<div class="t " style="top:492.4px;height:20px;line-height:20px;left:191.8px;transform-origin:0 50%;">292-312</div>
<div class="t " style="top:492.4px;height:20px;line-height:20px;right:1296.3px;transform-origin:100% 50%;">45</div>
<div class="t " style="top:492.4px;height:20px;line-height:20px;right:1204px;transform-origin:100% 50%;">24</div>
<div class="t " style="top:492.4px;height:20px;line-height:20px;right:1153.8px;transform-origin:100% 50%;">53,3</div>
<div class="t " style="top:492.4px;height:20px;line-height:20px;right:1093.8px;transform-origin:100% 50%;">45</div>
<div class="t " style="top:492.4px;height:20px;line-height:20px;right:1024.3px;transform-origin:100% 50%;">3</div>
<div class="t " style="top:492.4px;height:20px;line-height:20px;right:970.8px;transform-origin:100% 50%;">6,8</div>
<div class="t " style="top:492.4px;height:20px;line-height:20px;right:926.1px;transform-origin:100% 50%;">0-14</div>
<div class="t " style="top:492.4px;height:20px;line-height:20px;right:861.5px;transform-origin:100% 50%;">0</div>
<div class="t " style="top:492.4px;height:20px;line-height:20px;right:826.8px;transform-origin:100% 50%;">0</div>
<div class="t " style="top:492.4px;height:20px;line-height:20px;right:757.3px;transform-origin:100% 50%;">20</div>
<div class="t " style="top:518px;height:20px;line-height:20px;left:191.8px;transform-origin:0 50%;">313-333</div>
<div class="t " style="top:518px;height:20px;line-height:20px;right:1296.3px;transform-origin:100% 50%;">43</div>
<div class="t " style="top:518px;height:20px;line-height:20px;right:1204px;transform-origin:100% 50%;">26</div>
<div class="t " style="top:518px;height:20px;line-height:20px;right:1153.8px;transform-origin:100% 50%;">60,5</div>
<div class="t " style="top:518px;height:20px;line-height:20px;right:1093.8px;transform-origin:100% 50%;">43</div>
<div class="t " style="top:518px;height:20px;line-height:20px;right:1024.3px;transform-origin:100% 50%;">8</div>
<div class="t " style="top:518px;height:20px;line-height:20px;right:970.8px;transform-origin:100% 50%;">20,0</div>
<div class="t " style="top:518px;height:20px;line-height:20px;right:926.1px;transform-origin:100% 50%;">8-32</div>
<div class="t " style="top:518px;height:20px;line-height:20px;right:861.5px;transform-origin:100% 50%;">0</div>
<div class="t " style="top:518px;height:20px;line-height:20px;right:826.8px;transform-origin:100% 50%;">0</div>
<div class="t " style="top:518px;height:20px;line-height:20px;right:757.3px;transform-origin:100% 50%;">15</div>
<div class="t " style="top:543.6px;height:20px;line-height:20px;left:191.8px;transform-origin:0 50%;">334-354</div>
<div class="t " style="top:543.6px;height:20px;line-height:20px;right:1296.3px;transform-origin:100% 50%;">33</div>
<div class="t " style="top:543.6px;height:20px;line-height:20px;right:1204px;transform-origin:100% 50%;">17</div>
<div class="t " style="top:543.6px;height:20px;line-height:20px;right:1153.8px;transform-origin:100% 50%;">51,5</div>
<div class="t " style="top:543.6px;height:20px;line-height:20px;right:1093.8px;transform-origin:100% 50%;">33</div>
<div class="t " style="top:543.6px;height:20px;line-height:20px;right:1024.3px;transform-origin:100% 50%;">3</div>
<div class="t " style="top:543.6px;height:20px;line-height:20px;right:970.8px;transform-origin:100% 50%;">9,4</div>
<div class="t " style="top:543.6px;height:20px;line-height:20px;right:926.1px;transform-origin:100% 50%;">0-19</div>
<div class="t " style="top:543.6px;height:20px;line-height:20px;right:861.5px;transform-origin:100% 50%;">0</div>
<div class="t " style="top:543.6px;height:20px;line-height:20px;right:826.8px;transform-origin:100% 50%;">0</div>
<div class="t " style="top:543.6px;height:20px;line-height:20px;right:757.3px;transform-origin:100% 50%;">14</div>
</div>
<div class="t " style="top:84.3px;height:20px;line-height:20px;left:217px;width:600px;text-align:center;transform-origin:50% 50%;">Semana 35-35 (29/08/2018 - 28/08/2019) Ver</div>
<div class="t b" style="top:109.8px;height:20px;line-height:20px;left:47px;width:600px;text-align:center;transform-origin:50% 50%;">Taxa de Inseminação (TI)</div>
<div class="t b" style="top:109.8px;height:20px;line-height:20px;left:263px;width:600px;text-align:center;transform-origin:50% 50%;">Taxa de Prenhez (TP)</div>
<div class="t " style="top:109.8px;height:20px;line-height:20px;left:426.5px;width:600px;text-align:center;transform-origin:50% 50%;">Abortou</div>
<div class="t " style="top:135.3px;height:20px;line-height:20px;left:193px;transform-origin:0 50%;">DEL</div>
<div class="t " style="top:135.3px;height:20px;line-height:20px;right:1296.3px;transform-origin:100% 50%;">Elegível</div>
<div class="t " style="top:135.3px;height:20px;line-height:20px;right:1204px;transform-origin:100% 50%;">Inseminada</div>
<div class="t b" style="top:135.3px;height:20px;line-height:20px;right:1153.8px;transform-origin:100% 50%;">(IR) %</div>
<div class="t " style="top:135.3px;height:20px;line-height:20px;right:1093.8px;transform-origin:100% 50%;">Elegível</div>
<div class="t " style="top:135.3px;height:20px;line-height:20px;right:1024.3px;transform-origin:100% 50%;">Gestante</div>
<div class="t b" style="top:135.3px;height:20px;line-height:20px;right:970.8px;transform-origin:100% 50%;">(PR) %</div>
<div class="t " style="top:135.3px;height:20px;line-height:20px;right:926.1px;transform-origin:100% 50%;">95%</div>
<div class="t " style="top:135.3px;height:20px;line-height:20px;right:861.5px;transform-origin:100% 50%;">Número</div>
<div class="t " style="top:135.3px;height:20px;line-height:20px;right:826.8px;transform-origin:100% 50%;">%</div>
<div class="t " style="top:135.3px;height:20px;line-height:20px;right:757.3px;transform-origin:100% 50%;">% Abertas</div>
<div id="tfootbg"></div>
<div style="left:845px;top:554.3px;width:1.4px;height:31.5px;background:#7d7d7d"></div>
<div style="left:190px;top:584.6px;width:656px;height:1.2px;background:#8a8a8a"></div>
<div style="left:190px;top:554.3px;width:656px;height:1.6px;background:#6f6f6f"></div>
<div class="fc" style="left:246.3px;width:59px"></div>
<div class="t " style="top:560.4px;height:20px;line-height:20px;right:1298.1px;transform-origin:100% 50%;">1623</div>
<div class="fc" style="left:308.3px;width:89.3px"></div>
<div class="t " style="top:560.4px;height:20px;line-height:20px;right:1205.8px;transform-origin:100% 50%;">834</div>
<div class="fc" style="left:400.6px;width:47.2px"></div>
<div class="t b" style="top:560.6px;height:20px;line-height:20px;font-size:16px;right:1154.2px;transform-origin:100% 50%;transform:scaleX(0.92);">51,4%</div>
<div class="fc" style="left:450.8px;width:57px"></div>
<div class="t " style="top:560.4px;height:20px;line-height:20px;right:1095.6px;transform-origin:100% 50%;">1613</div>
<div class="fc" style="left:510.8px;width:66.5px"></div>
<div class="t " style="top:560.4px;height:20px;line-height:20px;right:1026.1px;transform-origin:100% 50%;">243</div>
<div class="fc" style="left:580.3px;width:50.5px"></div>
<div class="t b" style="top:560.6px;height:20px;line-height:20px;font-size:16px;right:971.2px;transform-origin:100% 50%;transform:scaleX(0.92);">15,7%</div>
<div class="fc" style="left:678.5px;width:61.6px"></div>
<div class="t " style="top:560.4px;height:20px;line-height:20px;right:863.3px;transform-origin:100% 50%;">36</div>
<div class="fc" style="left:743.1px;width:31.7px"></div>
<div class="t " style="top:560.4px;height:20px;line-height:20px;right:828.6px;transform-origin:100% 50%;">15%</div>
<div id="sb"><div class="thumb"></div><svg width="17" height="20" viewBox="0 0 17 20" style="left:0;top:0"><rect width="17" height="21" fill="#f7f7f7"/><path d="M4.6 12.8l3.9-4.1 3.9 4.1" stroke="#404040" stroke-width="2" fill="none"/></svg><svg width="17" height="20" viewBox="0 0 17 20" style="left:0;top:483px"><path d="M4.6 7.8l3.9 4.1 3.9-4.1" stroke="#404040" stroke-width="2" fill="none"/></svg></div>
<div id="cpanel"><i></i></div>
<svg class="chart" width="707" height="506" viewBox="880 80 707 506" font-family="Liberation Sans, Arial, sans-serif" font-size="12.7" letter-spacing="0">
<rect x="936.5" y="205.3" width="628" height="333" fill="none" stroke="#3a3a3a" stroke-width="1.1"/>
<rect x="942.30" y="404.42" width="23.70" height="134.18" fill="#ff0000" stroke="#000" stroke-width="0.9"/>
<rect x="942.30" y="486.42" width="23.70" height="52.18" fill="#008000" stroke="#000" stroke-width="0.9"/>
<rect x="979.35" y="368.34" width="23.70" height="170.26" fill="#ff0000" stroke="#000" stroke-width="0.9"/>
<rect x="979.35" y="486.42" width="23.70" height="52.18" fill="#008000" stroke="#000" stroke-width="0.9"/>
<rect x="1016.40" y="361.78" width="23.70" height="176.82" fill="#ff0000" stroke="#000" stroke-width="0.9"/>
<rect x="1016.40" y="479.86" width="23.70" height="58.74" fill="#008000" stroke="#000" stroke-width="0.9"/>
<rect x="1053.45" y="368.34" width="23.70" height="170.26" fill="#ff0000" stroke="#000" stroke-width="0.9"/>
<rect x="1053.45" y="486.42" width="23.70" height="52.18" fill="#008000" stroke="#000" stroke-width="0.9"/>
<rect x="1090.50" y="342.10" width="23.70" height="196.50" fill="#ff0000" stroke="#000" stroke-width="0.9"/>
<rect x="1090.50" y="473.30" width="23.70" height="65.30" fill="#008000" stroke="#000" stroke-width="0.9"/>
<rect x="1127.55" y="394.58" width="23.70" height="144.02" fill="#ff0000" stroke="#000" stroke-width="0.9"/>
<rect x="1127.55" y="492.98" width="23.70" height="45.62" fill="#008000" stroke="#000" stroke-width="0.9"/>
<rect x="1164.60" y="361.78" width="23.70" height="176.82" fill="#ff0000" stroke="#000" stroke-width="0.9"/>
<rect x="1164.60" y="496.26" width="23.70" height="42.34" fill="#008000" stroke="#000" stroke-width="0.9"/>
<rect x="1201.65" y="384.74" width="23.70" height="153.86" fill="#ff0000" stroke="#000" stroke-width="0.9"/>
<rect x="1201.65" y="496.26" width="23.70" height="42.34" fill="#008000" stroke="#000" stroke-width="0.9"/>
<rect x="1238.70" y="378.18" width="23.70" height="160.42" fill="#ff0000" stroke="#000" stroke-width="0.9"/>
<rect x="1238.70" y="509.38" width="23.70" height="29.22" fill="#008000" stroke="#000" stroke-width="0.9"/>
<rect x="1275.75" y="351.94" width="23.70" height="186.66" fill="#ff0000" stroke="#000" stroke-width="0.9"/>
<rect x="1275.75" y="463.46" width="23.70" height="75.14" fill="#008000" stroke="#000" stroke-width="0.9"/>
<rect x="1312.80" y="378.18" width="23.70" height="160.42" fill="#ff0000" stroke="#000" stroke-width="0.9"/>
<rect x="1312.80" y="489.70" width="23.70" height="48.90" fill="#008000" stroke="#000" stroke-width="0.9"/>
<rect x="1349.85" y="351.94" width="23.70" height="186.66" fill="#ff0000" stroke="#000" stroke-width="0.9"/>
<rect x="1349.85" y="499.54" width="23.70" height="39.06" fill="#008000" stroke="#000" stroke-width="0.9"/>
<rect x="1386.90" y="365.06" width="23.70" height="173.54" fill="#ff0000" stroke="#000" stroke-width="0.9"/>
<rect x="1386.90" y="515.94" width="23.70" height="22.66" fill="#008000" stroke="#000" stroke-width="0.9"/>
<rect x="1423.95" y="342.10" width="23.70" height="196.50" fill="#ff0000" stroke="#000" stroke-width="0.9"/>
<rect x="1423.95" y="473.30" width="23.70" height="65.30" fill="#008000" stroke="#000" stroke-width="0.9"/>
<rect x="1461.00" y="368.34" width="23.70" height="170.26" fill="#ff0000" stroke="#000" stroke-width="0.9"/>
<rect x="1461.00" y="509.38" width="23.70" height="29.22" fill="#008000" stroke="#000" stroke-width="0.9"/>
<rect x="1498.05" y="355.22" width="23.70" height="183.38" fill="#ff0000" stroke="#000" stroke-width="0.9"/>
<rect x="1498.05" y="492.98" width="23.70" height="45.62" fill="#008000" stroke="#000" stroke-width="0.9"/>
<rect x="1535.10" y="358.50" width="23.70" height="180.10" fill="#ff0000" stroke="#000" stroke-width="0.9"/>
<rect x="1535.10" y="483.14" width="23.70" height="55.46" fill="#008000" stroke="#000" stroke-width="0.9"/>
<path d="M954.15 470.02V502.82M948.15 470.02h12M948.15 502.82h12" stroke="#000" stroke-width="2.1" fill="none"/>
<path d="M991.20 470.02V502.82M985.20 470.02h12M985.20 502.82h12" stroke="#000" stroke-width="2.1" fill="none"/>
<path d="M1028.25 460.18V499.54M1022.25 460.18h12M1022.25 499.54h12" stroke="#000" stroke-width="2.1" fill="none"/>
<path d="M1065.30 466.74V506.10M1059.30 466.74h12M1059.30 506.10h12" stroke="#000" stroke-width="2.1" fill="none"/>
<path d="M1102.35 450.34V496.26M1096.35 450.34h12M1096.35 496.26h12" stroke="#000" stroke-width="2.1" fill="none"/>
<path d="M1139.40 470.02V515.94M1133.40 470.02h12M1133.40 515.94h12" stroke="#000" stroke-width="2.1" fill="none"/>
<path d="M1176.45 470.02V522.50M1170.45 470.02h12M1170.45 522.50h12" stroke="#000" stroke-width="2.1" fill="none"/>
<path d="M1213.50 470.02V522.50M1207.50 470.02h12M1207.50 522.50h12" stroke="#000" stroke-width="2.1" fill="none"/>
<path d="M1250.55 486.42V532.34M1244.55 486.42h12M1244.55 532.34h12" stroke="#000" stroke-width="2.1" fill="none"/>
<path d="M1287.60 430.66V496.26M1281.60 430.66h12M1281.60 496.26h12" stroke="#000" stroke-width="2.1" fill="none"/>
<path d="M1324.65 456.90V524.14M1318.65 456.90h12M1318.65 524.14h12" stroke="#000" stroke-width="2.1" fill="none"/>
<path d="M1361.70 470.02V530.70M1355.70 470.02h12M1355.70 530.70h12" stroke="#000" stroke-width="2.1" fill="none"/>
<path d="M1398.75 492.98V538.90M1392.75 492.98h12M1392.75 538.90h12" stroke="#000" stroke-width="2.1" fill="none"/>
<path d="M1435.80 433.94V512.66M1429.80 433.94h12M1429.80 512.66h12" stroke="#000" stroke-width="2.1" fill="none"/>
<path d="M1472.85 476.58V538.90M1466.85 476.58h12M1466.85 538.90h12" stroke="#000" stroke-width="2.1" fill="none"/>
<path d="M1509.90 447.06V538.90M1503.90 447.06h12M1503.90 538.90h12" stroke="#000" stroke-width="2.1" fill="none"/>
<path d="M1546.95 463.46V502.82M1540.95 463.46h12M1540.95 502.82h12" stroke="#000" stroke-width="2.1" fill="none"/>
<path d="M936.4 204.8V539.1H1565" stroke="#000" stroke-width="2.5" fill="none"/>
<path d="M930.8 538.90H935.5" stroke="#000" stroke-width="1"/>
<text x="927.8" y="543.40" text-anchor="end">0</text>
<path d="M930.8 506.10H935.5" stroke="#000" stroke-width="1"/>
<text x="927.8" y="510.60" text-anchor="end">10</text>
<path d="M930.8 473.30H935.5" stroke="#000" stroke-width="1"/>
<text x="927.8" y="477.80" text-anchor="end">20</text>
<path d="M930.8 440.50H935.5" stroke="#000" stroke-width="1"/>
<text x="927.8" y="445.00" text-anchor="end">30</text>
<path d="M930.8 407.70H935.5" stroke="#000" stroke-width="1"/>
<text x="927.8" y="412.20" text-anchor="end">40</text>
<path d="M930.8 374.90H935.5" stroke="#000" stroke-width="1"/>
<text x="927.8" y="379.40" text-anchor="end">50</text>
<path d="M930.8 342.10H935.5" stroke="#000" stroke-width="1"/>
<text x="927.8" y="346.60" text-anchor="end">60</text>
<path d="M930.8 309.30H935.5" stroke="#000" stroke-width="1"/>
<text x="927.8" y="313.80" text-anchor="end">70</text>
<path d="M930.8 276.50H935.5" stroke="#000" stroke-width="1"/>
<text x="927.8" y="281.00" text-anchor="end">80</text>
<path d="M930.8 243.70H935.5" stroke="#000" stroke-width="1"/>
<text x="927.8" y="248.20" text-anchor="end">90</text>
<path d="M930.8 210.90H935.5" stroke="#000" stroke-width="1"/>
<text x="927.8" y="215.40" text-anchor="end">100</text>
<path d="M933 532.34H935.5" stroke="#555" stroke-width="0.7"/>
<path d="M933 525.78H935.5" stroke="#555" stroke-width="0.7"/>
<path d="M933 519.22H935.5" stroke="#555" stroke-width="0.7"/>
<path d="M933 512.66H935.5" stroke="#555" stroke-width="0.7"/>
<path d="M933 499.54H935.5" stroke="#555" stroke-width="0.7"/>
<path d="M933 492.98H935.5" stroke="#555" stroke-width="0.7"/>
<path d="M933 486.42H935.5" stroke="#555" stroke-width="0.7"/>
<path d="M933 479.86H935.5" stroke="#555" stroke-width="0.7"/>
<path d="M933 466.74H935.5" stroke="#555" stroke-width="0.7"/>
<path d="M933 460.18H935.5" stroke="#555" stroke-width="0.7"/>
<path d="M933 453.62H935.5" stroke="#555" stroke-width="0.7"/>
<path d="M933 447.06H935.5" stroke="#555" stroke-width="0.7"/>
<path d="M933 433.94H935.5" stroke="#555" stroke-width="0.7"/>
<path d="M933 427.38H935.5" stroke="#555" stroke-width="0.7"/>
<path d="M933 420.82H935.5" stroke="#555" stroke-width="0.7"/>
<path d="M933 414.26H935.5" stroke="#555" stroke-width="0.7"/>
<path d="M933 401.14H935.5" stroke="#555" stroke-width="0.7"/>
<path d="M933 394.58H935.5" stroke="#555" stroke-width="0.7"/>
<path d="M933 388.02H935.5" stroke="#555" stroke-width="0.7"/>
<path d="M933 381.46H935.5" stroke="#555" stroke-width="0.7"/>
<path d="M933 368.34H935.5" stroke="#555" stroke-width="0.7"/>
<path d="M933 361.78H935.5" stroke="#555" stroke-width="0.7"/>
<path d="M933 355.22H935.5" stroke="#555" stroke-width="0.7"/>
<path d="M933 348.66H935.5" stroke="#555" stroke-width="0.7"/>
<path d="M933 335.54H935.5" stroke="#555" stroke-width="0.7"/>
<path d="M933 328.98H935.5" stroke="#555" stroke-width="0.7"/>
<path d="M933 322.42H935.5" stroke="#555" stroke-width="0.7"/>
<path d="M933 315.86H935.5" stroke="#555" stroke-width="0.7"/>
<path d="M933 302.74H935.5" stroke="#555" stroke-width="0.7"/>
<path d="M933 296.18H935.5" stroke="#555" stroke-width="0.7"/>
<path d="M933 289.62H935.5" stroke="#555" stroke-width="0.7"/>
<path d="M933 283.06H935.5" stroke="#555" stroke-width="0.7"/>
<path d="M933 269.94H935.5" stroke="#555" stroke-width="0.7"/>
<path d="M933 263.38H935.5" stroke="#555" stroke-width="0.7"/>
<path d="M933 256.82H935.5" stroke="#555" stroke-width="0.7"/>
<path d="M933 250.26H935.5" stroke="#555" stroke-width="0.7"/>
<path d="M933 237.14H935.5" stroke="#555" stroke-width="0.7"/>
<path d="M933 230.58H935.5" stroke="#555" stroke-width="0.7"/>
<path d="M933 224.02H935.5" stroke="#555" stroke-width="0.7"/>
<path d="M933 217.46H935.5" stroke="#555" stroke-width="0.7"/>
<path d="M954.15 540.3V545.8" stroke="#000" stroke-width="1"/>
<path d="M963.41 540.3V543.4" stroke="#444" stroke-width="0.8"/>
<path d="M972.67 540.3V543.4" stroke="#444" stroke-width="0.8"/>
<path d="M981.94 540.3V543.4" stroke="#444" stroke-width="0.8"/>
<text x="954.15" y="560.6" text-anchor="middle">40</text>
<text x="954.15" y="577.6" text-anchor="middle">60</text>
<path d="M991.20 540.3V545.8" stroke="#000" stroke-width="1"/>
<path d="M1000.46 540.3V543.4" stroke="#444" stroke-width="0.8"/>
<path d="M1009.72 540.3V543.4" stroke="#444" stroke-width="0.8"/>
<path d="M1018.99 540.3V543.4" stroke="#444" stroke-width="0.8"/>
<text x="991.20" y="560.6" text-anchor="middle">61</text>
<text x="991.20" y="577.6" text-anchor="middle">81</text>
<path d="M1028.25 540.3V545.8" stroke="#000" stroke-width="1"/>
<path d="M1037.51 540.3V543.4" stroke="#444" stroke-width="0.8"/>
<path d="M1046.78 540.3V543.4" stroke="#444" stroke-width="0.8"/>
<path d="M1056.04 540.3V543.4" stroke="#444" stroke-width="0.8"/>
<text x="1028.25" y="560.6" text-anchor="middle">82</text>
<text x="1028.25" y="577.6" text-anchor="middle">102</text>
<path d="M1065.30 540.3V545.8" stroke="#000" stroke-width="1"/>
<path d="M1074.56 540.3V543.4" stroke="#444" stroke-width="0.8"/>
<path d="M1083.83 540.3V543.4" stroke="#444" stroke-width="0.8"/>
<path d="M1093.09 540.3V543.4" stroke="#444" stroke-width="0.8"/>
<text x="1065.30" y="560.6" text-anchor="middle">103</text>
<text x="1065.30" y="577.6" text-anchor="middle">123</text>
<path d="M1102.35 540.3V545.8" stroke="#000" stroke-width="1"/>
<path d="M1111.61 540.3V543.4" stroke="#444" stroke-width="0.8"/>
<path d="M1120.88 540.3V543.4" stroke="#444" stroke-width="0.8"/>
<path d="M1130.14 540.3V543.4" stroke="#444" stroke-width="0.8"/>
<text x="1102.35" y="560.6" text-anchor="middle">124</text>
<text x="1102.35" y="577.6" text-anchor="middle">144</text>
<path d="M1139.40 540.3V545.8" stroke="#000" stroke-width="1"/>
<path d="M1148.66 540.3V543.4" stroke="#444" stroke-width="0.8"/>
<path d="M1157.92 540.3V543.4" stroke="#444" stroke-width="0.8"/>
<path d="M1167.19 540.3V543.4" stroke="#444" stroke-width="0.8"/>
<text x="1139.40" y="560.6" text-anchor="middle">145</text>
<text x="1139.40" y="577.6" text-anchor="middle">165</text>
<path d="M1176.45 540.3V545.8" stroke="#000" stroke-width="1"/>
<path d="M1185.71 540.3V543.4" stroke="#444" stroke-width="0.8"/>
<path d="M1194.97 540.3V543.4" stroke="#444" stroke-width="0.8"/>
<path d="M1204.24 540.3V543.4" stroke="#444" stroke-width="0.8"/>
<text x="1176.45" y="560.6" text-anchor="middle">166</text>
<text x="1176.45" y="577.6" text-anchor="middle">186</text>
<path d="M1213.50 540.3V545.8" stroke="#000" stroke-width="1"/>
<path d="M1222.76 540.3V543.4" stroke="#444" stroke-width="0.8"/>
<path d="M1232.02 540.3V543.4" stroke="#444" stroke-width="0.8"/>
<path d="M1241.29 540.3V543.4" stroke="#444" stroke-width="0.8"/>
<text x="1213.50" y="560.6" text-anchor="middle">187</text>
<text x="1213.50" y="577.6" text-anchor="middle">207</text>
<path d="M1250.55 540.3V545.8" stroke="#000" stroke-width="1"/>
<path d="M1259.81 540.3V543.4" stroke="#444" stroke-width="0.8"/>
<path d="M1269.07 540.3V543.4" stroke="#444" stroke-width="0.8"/>
<path d="M1278.34 540.3V543.4" stroke="#444" stroke-width="0.8"/>
<text x="1250.55" y="560.6" text-anchor="middle">208</text>
<text x="1250.55" y="577.6" text-anchor="middle">228</text>
<path d="M1287.60 540.3V545.8" stroke="#000" stroke-width="1"/>
<path d="M1296.86 540.3V543.4" stroke="#444" stroke-width="0.8"/>
<path d="M1306.12 540.3V543.4" stroke="#444" stroke-width="0.8"/>
<path d="M1315.39 540.3V543.4" stroke="#444" stroke-width="0.8"/>
<text x="1287.60" y="560.6" text-anchor="middle">229</text>
<text x="1287.60" y="577.6" text-anchor="middle">249</text>
<path d="M1324.65 540.3V545.8" stroke="#000" stroke-width="1"/>
<path d="M1333.91 540.3V543.4" stroke="#444" stroke-width="0.8"/>
<path d="M1343.17 540.3V543.4" stroke="#444" stroke-width="0.8"/>
<path d="M1352.44 540.3V543.4" stroke="#444" stroke-width="0.8"/>
<text x="1324.65" y="560.6" text-anchor="middle">250</text>
<text x="1324.65" y="577.6" text-anchor="middle">270</text>
<path d="M1361.70 540.3V545.8" stroke="#000" stroke-width="1"/>
<path d="M1370.96 540.3V543.4" stroke="#444" stroke-width="0.8"/>
<path d="M1380.22 540.3V543.4" stroke="#444" stroke-width="0.8"/>
<path d="M1389.49 540.3V543.4" stroke="#444" stroke-width="0.8"/>
<text x="1361.70" y="560.6" text-anchor="middle">271</text>
<text x="1361.70" y="577.6" text-anchor="middle">291</text>
<path d="M1398.75 540.3V545.8" stroke="#000" stroke-width="1"/>
<path d="M1408.01 540.3V543.4" stroke="#444" stroke-width="0.8"/>
<path d="M1417.27 540.3V543.4" stroke="#444" stroke-width="0.8"/>
<path d="M1426.54 540.3V543.4" stroke="#444" stroke-width="0.8"/>
<text x="1398.75" y="560.6" text-anchor="middle">292</text>
<text x="1398.75" y="577.6" text-anchor="middle">312</text>
<path d="M1435.80 540.3V545.8" stroke="#000" stroke-width="1"/>
<path d="M1445.06 540.3V543.4" stroke="#444" stroke-width="0.8"/>
<path d="M1454.32 540.3V543.4" stroke="#444" stroke-width="0.8"/>
<path d="M1463.59 540.3V543.4" stroke="#444" stroke-width="0.8"/>
<text x="1435.80" y="560.6" text-anchor="middle">313</text>
<text x="1435.80" y="577.6" text-anchor="middle">333</text>
<path d="M1472.85 540.3V545.8" stroke="#000" stroke-width="1"/>
<path d="M1482.11 540.3V543.4" stroke="#444" stroke-width="0.8"/>
<path d="M1491.38 540.3V543.4" stroke="#444" stroke-width="0.8"/>
<path d="M1500.64 540.3V543.4" stroke="#444" stroke-width="0.8"/>
<text x="1472.85" y="560.6" text-anchor="middle">334</text>
<text x="1472.85" y="577.6" text-anchor="middle">354</text>
<path d="M1509.90 540.3V545.8" stroke="#000" stroke-width="1"/>
<path d="M1519.16 540.3V543.4" stroke="#444" stroke-width="0.8"/>
<path d="M1528.42 540.3V543.4" stroke="#444" stroke-width="0.8"/>
<path d="M1537.69 540.3V543.4" stroke="#444" stroke-width="0.8"/>
<text x="1509.90" y="560.6" text-anchor="middle">355</text>
<text x="1509.90" y="577.6" text-anchor="middle">375</text>
<path d="M1546.95 540.3V545.8" stroke="#000" stroke-width="1"/>
<path d="M1556.21 540.3V543.4" stroke="#444" stroke-width="0.8"/>
<text x="1546.95" y="560.6" text-anchor="middle">&gt; 375</text>
<polyline fill="none" stroke="#000" stroke-width="2.5" stroke-linejoin="round" points="939.9,219.9 945.0,219.7 950.2,220.7 953.0,225.0 957.6,234.9 961.6,248.5 967.6,262.1 971.7,278.4 976.0,289.0 982.0,302.9 988.8,312.4 992.9,321.4 998.9,322.0 1002.4,329.6 1007.9,330.1 1018.8,336.1 1024.2,336.4 1030.2,339.1 1040.5,360.1 1051.4,368.8 1059.6,370.1 1067.8,380.5 1080.0,388.8 1090.0,389.5 1102.5,397.0 1112.5,407.5 1121.0,419.5 1126.0,421.0 1133.8,420.0 1142.5,425.5 1155.0,428.8 1165.0,432.5 1175.0,440.0 1188.8,448.0 1198.8,444.5 1207.5,447.0 1216.2,452.0 1235.0,452.5 1242.5,448.8 1252.5,448.0 1257.5,453.8 1270.0,454.5 1280.0,459.5 1287.5,465.0 1298.8,471.2 1310.0,471.8 1322.5,476.2 1335.0,477.0 1347.5,474.5 1360.0,482.0 1375.0,483.0 1390.0,481.2 1405.0,477.0 1417.5,476.2 1430.0,480.0 1442.5,487.0 1455.0,491.8 1470.0,492.0 1485.0,495.5 1495.0,495.8 1507.5,498.8 1520.0,501.8 1527.5,500.8 1540.0,504.2 1557.5,508.0"/>
<text x="1233" y="121.3" text-anchor="middle" fill="#2424ff">Taxa de Inseminação, Taxa de Prenhez</text>
<rect x="1035.5" y="139.5" width="451" height="51" fill="#1a1a1a"/>
<rect x="1032.5" y="136.5" width="451" height="51" fill="#fff" stroke="#000" stroke-width="1"/>
<rect x="1037.5" y="144.5" width="12" height="12" fill="#fff" stroke="#d8d8d8" stroke-width="1"/><path d="M1037.5 156.5v-12h12" stroke="#707070" stroke-width="1.2" fill="none"/><path d="M1039.8 150.2l2.4 2.6l4.4-5.4" stroke="#000" stroke-width="1.8" fill="none"/>
<rect x="1037.5" y="165.5" width="12" height="12" fill="#fff" stroke="#d8d8d8" stroke-width="1"/><path d="M1037.5 177.5v-12h12" stroke="#707070" stroke-width="1.2" fill="none"/><path d="M1039.8 171.2l2.4 2.6l4.4-5.4" stroke="#000" stroke-width="1.8" fill="none"/>
<rect x="1257.5" y="144.5" width="12" height="12" fill="#fff" stroke="#d8d8d8" stroke-width="1"/><path d="M1257.5 156.5v-12h12" stroke="#707070" stroke-width="1.2" fill="none"/><path d="M1259.8 150.2l2.4 2.6l4.4-5.4" stroke="#000" stroke-width="1.8" fill="none"/>
<rect x="1257.5" y="165.5" width="12" height="12" fill="#fff" stroke="#d8d8d8" stroke-width="1"/><path d="M1257.5 177.5v-12h12" stroke="#707070" stroke-width="1.2" fill="none"/><path d="M1259.8 171.2l2.4 2.6l4.4-5.4" stroke="#000" stroke-width="1.8" fill="none"/>
<rect x="1060.5" y="146.5" width="29" height="13" fill="#808080" opacity="0.6"/>
<rect x="1058" y="144" width="29" height="13" fill="#ff0000" stroke="#300" stroke-width="0.8"/>
<rect x="1281.5" y="146.5" width="29" height="13" fill="#808080" opacity="0.6"/>
<rect x="1279" y="144" width="29" height="13" fill="#008000" stroke="#020" stroke-width="0.8"/>
<path d="M1278 165.2h30M1278 177.2h30M1293 165.2v12" stroke="#000" stroke-width="2" fill="none"/>
<text x="1096.5" y="154.1">Taxa de Inseminação</text>
<text x="1096.5" y="175.1">% Abertas</text>
<text x="1316.5" y="154.1">Taxa de Prenhez</text>
<text x="1316.5" y="175.1">Intervalo de confiança 95%</text>
</svg>
<div id="tip"></div>
<div class="t " style="top:178px;height:20px;line-height:20px;left:824.5px;transform-origin:0 50%;transform:scaleX(0.92);">Calculado o último dia do período</div>
<div class="gb" style="left:184px;top:608px;width:212px;height:48px"></div>
<div style="left:190px;top:600px;width:58px;height:16px;background:#f0f0f0"></div>
<div class="t " style="top:598.6px;height:20px;line-height:20px;left:193.5px;transform-origin:0 50%;">Lote por</div>
<div class="combo" style="left:189px;top:619px;width:201px;height:28px"><svg width="12" height="8" viewBox="0 0 12 8"><path d="M1 1l5 5 5-5" stroke="#444" stroke-width="1.3" fill="none"/></svg></div>
<div class="t " style="top:622.9px;height:20px;line-height:20px;left:192.5px;transform-origin:0 50%;">Dias em Lactação</div>
<div class="gb" style="left:403px;top:608px;width:212px;height:48px"></div>
<div class="cb" style="left:415px;top:625px"><svg width="13" height="13" viewBox="0 0 13 13"><path d="M2 6.4l3.2 3.4L11 2.6" stroke="#1a1a1a" stroke-width="1.5" fill="none"/></svg></div>
<div class="t " style="top:622.9px;height:20px;line-height:20px;left:435.5px;transform-origin:0 50%;">Tabela</div>
<div class="cb" style="left:510px;top:625px"><svg width="13" height="13" viewBox="0 0 13 13"><path d="M2 6.4l3.2 3.4L11 2.6" stroke="#1a1a1a" stroke-width="1.5" fill="none"/></svg></div>
<div class="t " style="top:622.9px;height:20px;line-height:20px;left:530px;transform-origin:0 50%;">Gráfico</div>
<div class="btn" style="left:193px;top:672px;width:92px"></div>
<div class="t " style="top:675.5px;height:20px;line-height:20px;left:-61.3px;width:600px;text-align:center;transform-origin:50% 50%;">Filtro</div>
<div class="cb" style="left:296px;top:681px"><svg width="13" height="13" viewBox="0 0 13 13"><path d="M2 6.4l3.2 3.4L11 2.6" stroke="#1a1a1a" stroke-width="1.5" fill="none"/></svg></div>
<div class="t " style="top:679px;height:20px;line-height:20px;left:315.7px;transform-origin:0 50%;">Usar filtro</div>
<div class="combo" style="left:446px;top:675px;width:169px;height:28px"><svg width="12" height="8" viewBox="0 0 12 8"><path d="M1 1l5 5 5-5" stroke="#444" stroke-width="1.3" fill="none"/></svg></div>
<div class="t " style="top:679px;height:20px;line-height:20px;left:450px;transform-origin:0 50%;">Aberta</div>
<div id="ybox"></div>
<div class="t blue" style="top:666.8px;height:20px;line-height:20px;left:448.8px;width:600px;text-align:center;transform-origin:50% 50%;transform:scaleX(0.91);">Último diagnóstico de gestação:</div>
<div class="t blue" style="top:685.2px;height:20px;line-height:20px;left:448.8px;width:600px;text-align:center;transform-origin:50% 50%;transform:scaleX(0.9);">26/08/2019</div>
<div class="btn" style="left:1210px;top:672px;width:121px;border:2px solid #0078d7"><span style="position:absolute;left:1px;top:1px;right:1px;bottom:1px;border:1px dotted #222"></span></div>
<div class="t " style="top:675.2px;height:20px;line-height:20px;left:969.8px;width:600px;text-align:center;transform-origin:50% 50%;">Pré-Visualização</div>
<div class="btn" style="left:1339px;top:672px;width:121px"></div>
<div class="t " style="top:675.2px;height:20px;line-height:20px;left:1097.9px;width:600px;text-align:center;transform-origin:50% 50%;"><u>P</u>ropriedades</div>
<div class="btn" style="left:1468px;top:672px;width:121px"></div>
<div class="t " style="top:675.2px;height:20px;line-height:20px;left:1226.9px;width:600px;text-align:center;transform-origin:50% 50%;"><u>F</u>echar</div>
<div id="btabs"></div>
<div class="btab" style="left:178px;width:127px"></div>
<div class="btab" style="left:305px;width:57px"></div>
<div class="btab" style="left:362px;width:221px"></div>
<div class="btab" style="left:583px;width:155px"></div>
<div class="btab act" style="left:738px;width:119px"><svg width="13" height="13" viewBox="0 0 13 13" style="left:99.5px;top:14.8px"><rect width="13" height="13" fill="#c8434a"/><path d="M3.8 3.8l5.4 5.4M9.2 3.8L3.8 9.2" stroke="#fff" stroke-width="1.8"/></svg></div>
<div class="t " style="top:719.8px;height:20px;line-height:20px;left:185.5px;transform-origin:0 50%;">Painel de Controle</div>
<div class="t " style="top:719.8px;height:20px;line-height:20px;left:313.2px;transform-origin:0 50%;">Gestão</div>
<div class="t " style="top:719.8px;height:20px;line-height:20px;left:369.2px;transform-origin:0 50%;">Estado de Fertilidade do Rebanho</div>
<div class="t " style="top:719.8px;height:20px;line-height:20px;left:589.5px;transform-origin:0 50%;">Análise de Fertilidade V</div>
<div class="t b" style="top:721.6px;height:20px;line-height:20px;left:746.7px;transform-origin:0 50%;">Fertilidade V</div>
<div id="status"><div class="sep" style="left:197px"></div><div class="sep" style="left:396px"></div><div class="sep" style="left:1597px"></div></div>
<div class="t " style="top:749.8px;height:20px;line-height:20px;left:6px;transform-origin:0 50%;transform:scaleX(0.837);"><span class="navy">Version :</span> 5.4.0.530 BR</div>
<div class="t " style="top:749.8px;height:20px;line-height:20px;left:205px;transform-origin:0 50%;transform:scaleX(0.837);"><span class="navy">DB Version :</span> 5.4.163 GL</div>
</body></html>
